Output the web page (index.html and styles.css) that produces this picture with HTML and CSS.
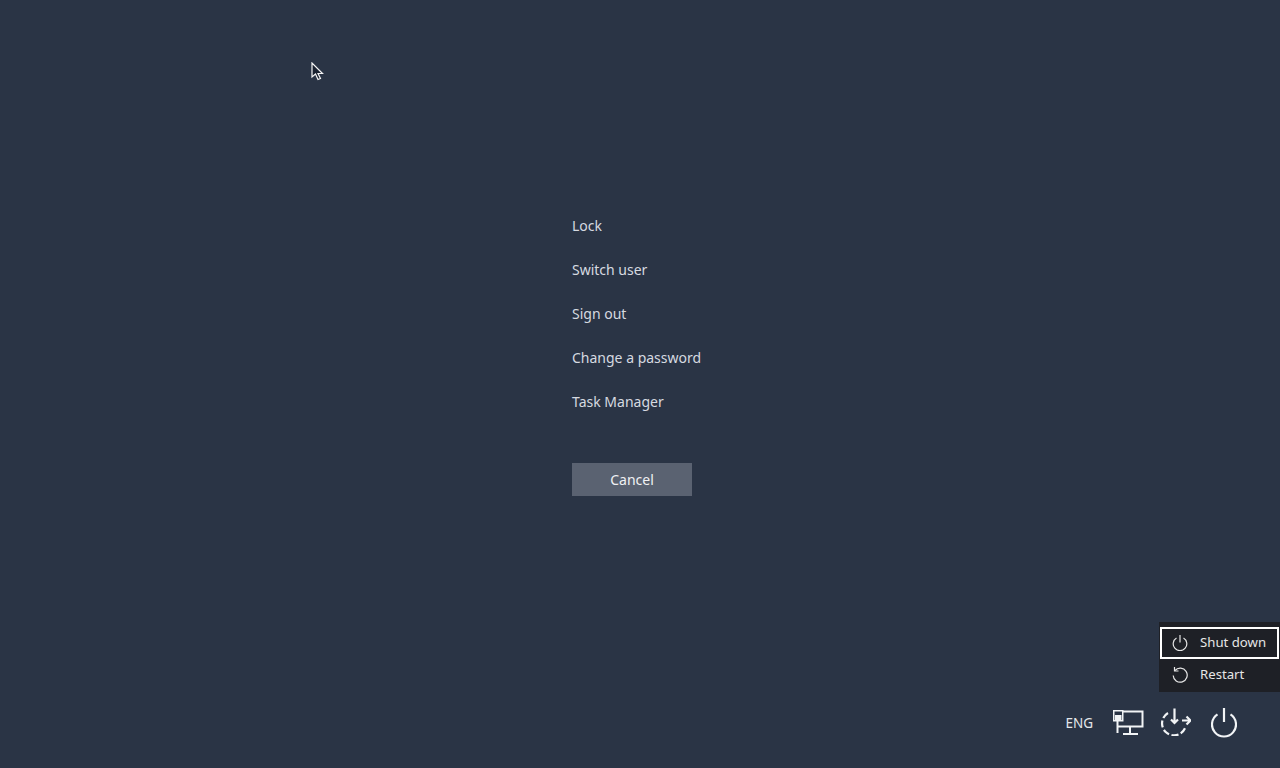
FILE: index.html
```html
<!DOCTYPE html>
<html lang="en">
<head>
    <meta charset="UTF-8">
    <meta name="viewport" content="width=device-width, initial-scale=1.0">
    <title>Security options</title>
    <link rel="stylesheet" href="styles.css">
</head>
<body>
    <main class="security-screen">
        <ul class="options">
            <li><a href="#">Lock</a></li>
            <li><a href="#">Switch user</a></li>
            <li><a href="#">Sign out</a></li>
            <li><a href="#">Change a password</a></li>
            <li><a href="#">Task Manager</a></li>
        </ul>
        <button class="cancel-btn">Cancel</button>
    </main>

    <footer class="tray">
        <span class="tray-lang">ENG</span>
        <svg class="tray-icon net" width="31" height="26" viewBox="0 0 31 26" fill="none" stroke="#f2f4f6" stroke-width="2">
            <path d="M9 2.500H29.500V17.500H4"/>
            <path d="M4.500 12V24M10 25H25M17 17.500V25"/>
            <rect x="0.750" y="1.750" width="9" height="10" stroke-width="1.500"/>
            <rect x="2" y="6" width="6.500" height="5" fill="#f2f4f6" stroke="none"/>
        </svg>
        <svg class="tray-icon ease" width="31" height="28" viewBox="0 0 31 28" fill="none" stroke="#f2f4f6" stroke-width="2.200">
            <path d="M8 5A12 12 0 1 0 25 20.300" stroke-dasharray="7 2.500"/>
            <path d="M14.500 0.500V15M11 11.500L14.500 15L18 11.500"/>
            <path d="M22 12.500H30M26.500 8.500L30.500 12.500L26.500 16.500"/>
        </svg>
        <svg class="tray-icon power" width="26" height="32" viewBox="0 0 26 32" fill="none" stroke="#f2f4f6" stroke-width="2.200">
            <path d="M6.500 8.400A12 12 0 1 0 19.500 8.400"/>
            <path d="M13 2V16"/>
        </svg>
    </footer>

    <div class="power-menu">
        <div class="power-item selected">
            <svg width="16" height="17" viewBox="0 0 16 17" fill="none" stroke="#e6e6e6" stroke-width="1.200">
                <path d="M4.500 4A6.800 6.800 0 1 0 11.500 4"/>
                <path d="M8 1V8.500"/>
            </svg>
            <span>Shut down</span>
        </div>
        <div class="power-item">
            <svg width="16" height="17" viewBox="0 0 16 17" fill="none" stroke="#e6e6e6" stroke-width="1.200">
                <path d="M3 4.500A7 7 0 1 1 1.200 9.500"/>
                <path d="M2.500 1V5H6.500"/>
            </svg>
            <span>Restart</span>
        </div>
    </div>

    <svg class="cursor" width="14" height="20" viewBox="0 0 14 20">
        <path d="M1 1V15L4.500 12L7 17.500L9.500 16.500L7 11.500H11.500Z" fill="#1a2230" stroke="#f4f4f4" stroke-width="1.200"/>
    </svg>
</body>
</html>
```

FILE: styles.css
```css
html, body {
    height: 100%;
}

body {
    margin: 0;
    background-color: #2a3445;
    color: #d6dae0;
    font-family: 'Noto Sans', 'Open Sans', sans-serif;
    font-size: 14px;
    overflow: hidden;
}

.security-screen {
    display: flex;
    flex-direction: column;
    align-items: flex-start;
    padding: 204px 0 0 572px;
}

.options {
    list-style: none;
    margin: 0 0 39px;
    padding: 0;
}

.options li {
    height: 44px;
    line-height: 44px;
}

.options a {
    color: #d6dae0;
    text-decoration: none;
}

.cancel-btn {
    width: 120px;
    height: 33px;
    border: none;
    padding: 0;
    background-color: #5a6271;
    color: #f0f1f3;
    font-family: inherit;
    font-size: 14px;
}

.tray {
    position: absolute;
    right: 43px;
    bottom: 30px;
    display: flex;
    align-items: center;
}

.tray-lang {
    color: #e4e7ea;
    font-size: 13.500px;
    margin-top: 2px;
    margin-right: 20px;
}

.tray-icon {
    display: block;
}

.tray-icon.net {
    margin-right: 16px;
}

.tray-icon.ease {
    margin-right: 20px;
}

.power-menu {
    position: absolute;
    right: 0;
    top: 622px;
    width: 121px;
    height: 70px;
    box-sizing: border-box;
    padding-top: 5px;
    background-color: #1e2026;
}

.power-item {
    display: flex;
    align-items: center;
    gap: 12px;
    height: 32px;
    box-sizing: border-box;
    margin: 0 1px;
    padding-left: 12px;
    padding-bottom: 2px;
    color: #e6e6e6;
    font-size: 13.200px;
}

.power-item.selected {
    border: 2px solid #fff;
    padding-left: 10px;
}

.cursor {
    position: absolute;
    left: 311px;
    top: 62px;
}
```
